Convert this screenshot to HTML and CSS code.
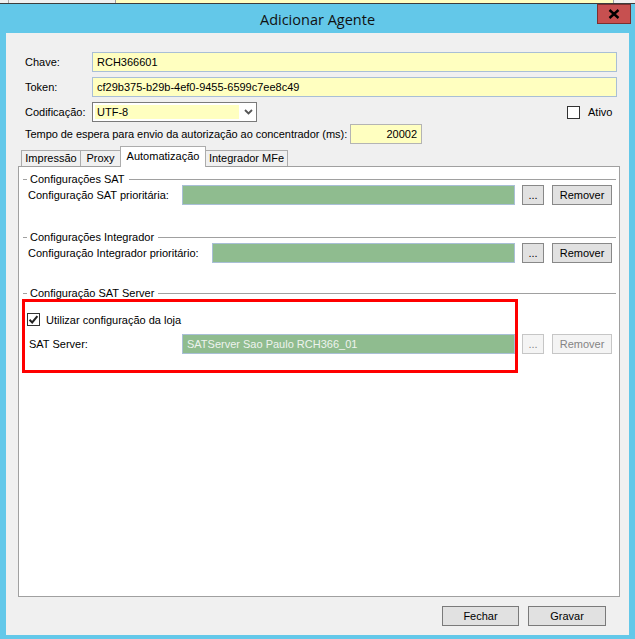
FILE: index.html
```html
<!DOCTYPE html>
<html lang="pt">
<head>
<meta charset="utf-8">
<title>Adicionar Agente</title>
<link rel="stylesheet" href="styles.css">
</head>
<body>
<div class="bgstrip">
  <div class="bg-left"><div class="bg-cell"></div><span class="bg-text bg-n">N</span></div>
  <div class="bg-mid"><span class="bg-text">RCH366</span></div>
  <div class="bg-right"></div>
</div>
<div class="window">
  <div class="titlebar">
    <div class="title">Adicionar Agente</div>
    <div class="close">
      <svg width="12" height="10" viewBox="0 0 12 10"><path d="M1.5 1 L10.5 9 M10.5 1 L1.5 9" stroke="#000" stroke-width="2.4" fill="none"/></svg>
    </div>
  </div>
  <div class="client">
    <div class="row">
      <div class="lbl">Chave:</div>
      <div class="input grow">RCH366601</div>
    </div>
    <div class="row r-gap5">
      <div class="lbl">Token:</div>
      <div class="input grow">cf29b375-b29b-4ef0-9455-6599c7ee8c49</div>
    </div>
    <div class="row r-gap5">
      <div class="lbl">Codificação:</div>
      <div class="select">
        <div class="select-val">UTF-8</div>
        <div class="select-arrow"><svg width="9" height="6" viewBox="0 0 9 6"><path d="M1 1 L4.5 4.5 L8 1" stroke="#555" stroke-width="1.8" fill="none"/></svg></div>
      </div>
      <div class="ativo">
        <div class="chk"></div>
        <span>Ativo</span>
      </div>
    </div>
    <div class="row r-gap2">
      <div class="lbl lbl-wide">Tempo de espera para envio da autorização ao concentrador (ms):</div>
      <div class="input num">20002</div>
    </div>

    <div class="tabcontrol">
      <div class="tabs">
        <div class="tab t1">Impressão</div>
        <div class="tab t2">Proxy</div>
        <div class="tab t3 active">Automatização</div>
        <div class="tab t4">Integrador MFe</div>
      </div>
      <div class="panel">
        <div class="ghead g1"><span>Configurações SAT</span></div>
        <div class="grow-row">
          <div class="glbl w154">Configuração SAT prioritária:</div>
          <div class="field"></div>
          <div class="btn dots">...</div>
          <div class="btn rem">Remover</div>
        </div>

        <div class="ghead g2"><span>Configurações Integrador</span></div>
        <div class="grow-row">
          <div class="glbl w184">Configuração Integrador prioritário:</div>
          <div class="field"></div>
          <div class="btn dots">...</div>
          <div class="btn rem">Remover</div>
        </div>

        <div class="ghead g3"><span>Configuração SAT Server</span></div>
        <div class="chk-row">
          <div class="chk checked">
            <svg width="11" height="11" viewBox="0 0 11 11"><path d="M1.5 5.8 L4.2 8.5 L9.4 2.2" stroke="#222" stroke-width="2" fill="none"/></svg>
          </div>
          <span>Utilizar configuração da loja</span>
        </div>
        <div class="grow-row sat-row">
          <div class="glbl w153">SAT Server:</div>
          <div class="field disabled">SATServer Sao Paulo RCH366_01</div>
          <div class="btn dots off">...</div>
          <div class="btn rem off">Remover</div>
        </div>

        <div class="highlight"></div>
      </div>
    </div>

    <div class="footer">
      <div class="btn fbtn fechar">Fechar</div>
      <div class="btn fbtn gravar">Gravar</div>
    </div>
  </div>
</div>
</body>
</html>
```
FILE: styles.css
```css
* { box-sizing: border-box; }
html, body { margin: 0; padding: 0; }
body {
  width: 635px;
  height: 639px;
  overflow: hidden;
  background: #63c8e9;
  font-family: "Liberation Sans", Arial, sans-serif;
  font-size: 11px;
  color: #000;
}

/* background window strip */
.bgstrip {
  height: 4px;
  display: flex;
  border-bottom: 1px solid #3c3c3c;
  overflow: hidden;
}
.bg-left {
  width: 115px;
  background: #f0f0f0;
  display: flex;
}
.bg-cell {
  width: 9px;
  border-right: 1px solid #a8a8a8;
}
.bg-text {
  display: block;
  line-height: 11px;
  margin-top: -9px;
  font-size: 11px;
}
.bg-n { margin-left: 9px; color: #4a1040; }
.bg-mid {
  width: 498px;
  background: #ffffc0;
  border-left: 1px solid #a0a0a0;
  padding-left: 5px;
}
.bg-right {
  flex: 1;
  background: #f0f0f0;
  border-left: 1px solid #a0a0a0;
}

/* title bar */
.titlebar {
  height: 29px;
  display: grid;
  grid-template-columns: 1fr auto 1fr;
}
.title {
  grid-column: 2;
  align-self: center;
  font-family: "Open Sans", "Noto Sans", sans-serif;
  font-size: 14.5px;
  color: #111;
  padding-top: 1px;
}
.close {
  grid-column: 3;
  justify-self: end;
  align-self: start;
  width: 34px;
  height: 20px;
  margin-right: 4px;
  background: #c75050;
  border: 1px solid #7c2f2f;
  display: flex;
  align-items: center;
  justify-content: center;
}

/* client area */
.client {
  margin: 0 6px;
  height: 602px;
  background: #f0f0f0;
  padding: 19px 12px 0 19px;
  display: flex;
  flex-direction: column;
}
.row {
  display: flex;
  align-items: center;
  height: 20px;
}
.r-gap5 { margin-top: 5px; }
.r-gap2 { margin-top: 2px; }
.lbl {
  width: 67px;
  line-height: 20px;
  white-space: nowrap;
}
.lbl-wide { width: 325px; letter-spacing: -0.05px; }
.input {
  height: 20px;
  border: 1px solid #a9bfd6;
  background: #ffffc0;
  padding: 0 4px;
  line-height: 18px;
  white-space: nowrap;
  overflow: hidden;
}
.grow { flex: 1; }
.num {
  width: 72px;
  text-align: right;
  border-color: #b4b4b4;
}

.select {
  width: 165px;
  height: 20px;
  border: 1px solid #7a7a7a;
  background: #fff;
  display: flex;
  padding: 2px 0 2px 2px;
}
.select-val {
  width: 144px;
  background: #ffffc0;
  line-height: 14px;
  padding-left: 2px;
}
.select-arrow {
  flex: 1;
  display: flex;
  align-items: center;
  justify-content: center;
  padding-left: 1px;
}

.ativo {
  margin-left: 310px;
  display: flex;
  align-items: center;
  gap: 8px;
}
.chk {
  width: 13px;
  height: 13px;
  border: 1px solid #333;
  background: #fff;
  display: flex;
  align-items: center;
  justify-content: center;
}

/* tabs */
.tabcontrol {
  margin: 2px -3px 0 -7px;
  display: flex;
  flex-direction: column;
}
.tabs {
  display: flex;
  align-items: flex-end;
  height: 21px;
  padding-left: 3px;
  margin-bottom: -1px;
  position: relative;
  z-index: 1;
}
.tab {
  height: 16px;
  margin-bottom: 1px;
  border: 1px solid #acacac;
  border-bottom: none;
  background: #f0f0f0;
  text-align: center;
  line-height: 15px;
  white-space: nowrap;
}
.tab + .tab { margin-left: -1px; }
.t1 { width: 60px; }
.t2 { width: 41px; }
.t3 { width: 86px; }
.t4 { width: 83px; }
.tab.active {
  height: 21px;
  margin-bottom: 0;
  background: #fff;
  line-height: 18px;
  position: relative;
  z-index: 2;
}
.panel {
  height: 431px;
  border: 1px solid #a0a0a0;
  background: #fff;
  position: relative;
  padding: 0 3px 0 4px;
  display: flex;
  flex-direction: column;
}

/* group boxes */
.ghead {
  display: flex;
  align-items: center;
  height: 11px;
}
.ghead::before {
  content: "";
  width: 4px;
  height: 1px;
  background: #a0a0a0;
}
.ghead::after {
  content: "";
  flex: 1;
  height: 1px;
  background: #a0a0a0;
}
.ghead span {
  padding: 0 4px 0 3px;
  line-height: 11px;
  white-space: nowrap;
}
.g1 { margin-top: 7px; }
.g2 { margin-top: 27px; }
.g3 { margin-top: 25px; }

.grow-row {
  display: flex;
  align-items: center;
  height: 20px;
  padding: 0 4px 0 5px;
}
.glbl { white-space: nowrap; }
.w154 { width: 154px; }
.w184 { width: 184px; }
.w153 { width: 153px; margin-left: 1px; }
.field {
  flex: 1;
  height: 20px;
  background: #8fbc8f;
  border: 1px solid #a9bfd6;
  padding: 0 4px;
  line-height: 18px;
  white-space: nowrap;
  overflow: hidden;
}
.field.disabled { color: #eef3ee; }

.btn {
  height: 20px;
  border: 1px solid #888;
  background: #e1e1e1;
  text-align: center;
  line-height: 18px;
  white-space: nowrap;
}
.btn.off {
  border-color: #c6c6c6;
  background: #f4f4f4;
  color: #848484;
}
.dots { width: 22px; margin-left: 7px; }
.rem { width: 60px; margin-left: 8px; }

.chk-row {
  margin-top: 14px;
  height: 13px;
  display: flex;
  align-items: center;
  gap: 6px;
  padding-left: 4px;
}
.sat-row { margin-top: 8px; }

.highlight {
  position: absolute;
  left: 3px;
  top: 132px;
  width: 496px;
  height: 74px;
  border: 3px solid #ff0000;
  pointer-events: none;
}

/* footer */
.footer {
  margin-top: 9px;
  margin-right: 11px;
  display: flex;
  justify-content: flex-end;
  gap: 9px;
}
.fbtn { border-color: #7a7a7a; }
.fechar { width: 77px; }
.gravar { width: 78px; }
```
